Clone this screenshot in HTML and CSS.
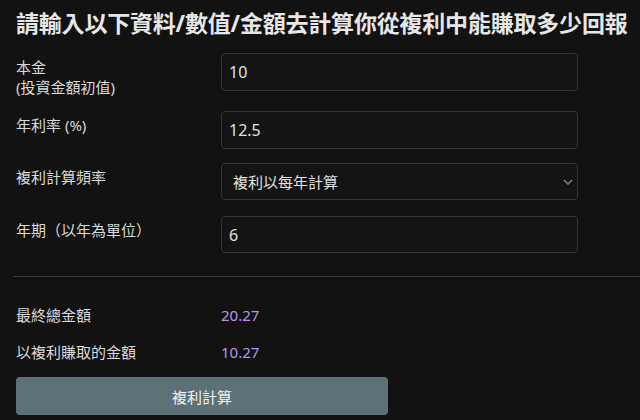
FILE: index.html
```html
<!DOCTYPE html>
<html lang="zh-Hant">
<head>
    <meta charset="UTF-8">
    <meta name="viewport" content="width=device-width, initial-scale=1.0">
    <title>複利計算</title>
    <link rel="stylesheet" href="styles.css">
</head>
<body>
    <div class="page">
        <h1 class="title">請輸入以下資料/數值/金額去計算你從複利中能賺取多少回報</h1>

        <div class="form">
            <div class="row row-principal">
                <label for="principal">本金<br>(投資金額初值)</label>
                <input type="text" id="principal" value="10">
            </div>
            <div class="row row-rate">
                <label for="rate">年利率 (%)</label>
                <input type="text" id="rate" value="12.5">
            </div>
            <div class="row row-freq">
                <label for="freq">複利計算頻率</label>
                <div class="select-wrap">
                    <select id="freq">
                        <option>複利以每年計算</option>
                        <option>複利以每半年計算</option>
                        <option>複利以每季計算</option>
                        <option>複利以每月計算</option>
                    </select>
                    <svg class="chevron" width="12" height="8" viewBox="0 0 12 8">
                        <path d="M2 2 L6 6 L10 2" fill="none" stroke="#7a7a7a" stroke-width="1.6"/>
                    </svg>
                </div>
            </div>
            <div class="row row-years">
                <label for="years">年期<span class="paren">（</span>以年為單位<span class="paren">）</span></label>
                <input type="text" id="years" value="6">
            </div>
        </div>

        <hr class="divider">

        <div class="results">
            <div class="result">
                <span class="result-label">最終總金額</span>
                <span class="result-value" id="total">20.27</span>
            </div>
            <div class="result">
                <span class="result-label">以複利賺取的金額</span>
                <span class="result-value" id="earned">10.27</span>
            </div>
        </div>

        <button id="calcBtn" class="calc-btn">複利計算</button>
    </div>
    <script>
        function calculate() {
            const p = parseFloat(document.getElementById('principal').value) || 0;
            const r = (parseFloat(document.getElementById('rate').value) || 0) / 100;
            const t = parseFloat(document.getElementById('years').value) || 0;
            const n = [1, 2, 4, 12][document.getElementById('freq').selectedIndex];
            const total = p * Math.pow(1 + r / n, n * t);

            document.getElementById('total').textContent = total.toFixed(2);
            document.getElementById('earned').textContent = (total - p).toFixed(2);
        }

        document.getElementById('calcBtn').addEventListener('click', calculate);
    </script>
</body>
</html>
```

FILE: styles.css
```css
body {
    margin: 0;
    background-color: #121212;
    color: #dcdcdc;
    font-family: "Noto Sans", "Noto Sans CJK TC", sans-serif;
    overflow: hidden;
}

.page {
    padding: 9px 0 0 16px;
}

.title {
    margin: 0 0 16px 0;
    font-size: 23px;
    line-height: 28px;
    font-weight: bold;
    color: #e6e6e6;
    white-space: nowrap;
    letter-spacing: -0.2px;
}

.form {
    width: 562px;
}

.row {
    display: grid;
    grid-template-columns: 205px 1fr;
    grid-template-rows: 38px;
    align-items: start;
}

.row-freq,
.row-years {
    grid-template-rows: 37px;
}

.row-principal { margin-bottom: 20px; }
.row-rate { margin-bottom: 14px; }
.row-freq { margin-bottom: 16px; }

.row label {
    padding-top: 4px;
    font-size: 15px;
    line-height: 20px;
    color: #d8d8d8;
    white-space: nowrap;
}

/* full-width brackets get trimmed to half width, pad them back out */
.paren {
    display: inline-block;
    width: 15px;
    text-align: center;
}

input, select {
    box-sizing: border-box;
    width: 100%;
    height: 38px;
    margin: 0;
    padding: 0 7px;
    background-color: #141414;
    color: #e0e0e0;
    border: 1px solid #363636;
    border-radius: 4px;
    font-family: inherit;
    font-size: 16px;
    outline: none;
}

.row-freq select,
.row-years input {
    height: 37px;
}

.select-wrap {
    position: relative;
}

select {
    appearance: none;
    padding-left: 11px;
    font-size: 15px;
}

.chevron {
    position: absolute;
    right: 4px;
    top: 15px;
    pointer-events: none;
}

.divider {
    margin: 23px -16px 0 -3px;
    border: none;
    border-top: 1px solid #383838;
}

.results {
    padding-top: 28px;
}

.result {
    display: grid;
    grid-template-columns: 205px 1fr;
    height: 37px;
    font-size: 15px;
    line-height: 20px;
}

.result-label {
    color: #d8d8d8;
}

.result-value {
    color: #b794e8;
}

.calc-btn {
    display: block;
    width: 372px;
    height: 38px;
    margin-top: -2px;
    background-color: #5e7177;
    color: #f0f0f0;
    border: none;
    border-radius: 4px;
    font-family: inherit;
    font-size: 15px;
    cursor: pointer;
}

.calc-btn:hover {
    background-color: #6b7f86;
}
```
